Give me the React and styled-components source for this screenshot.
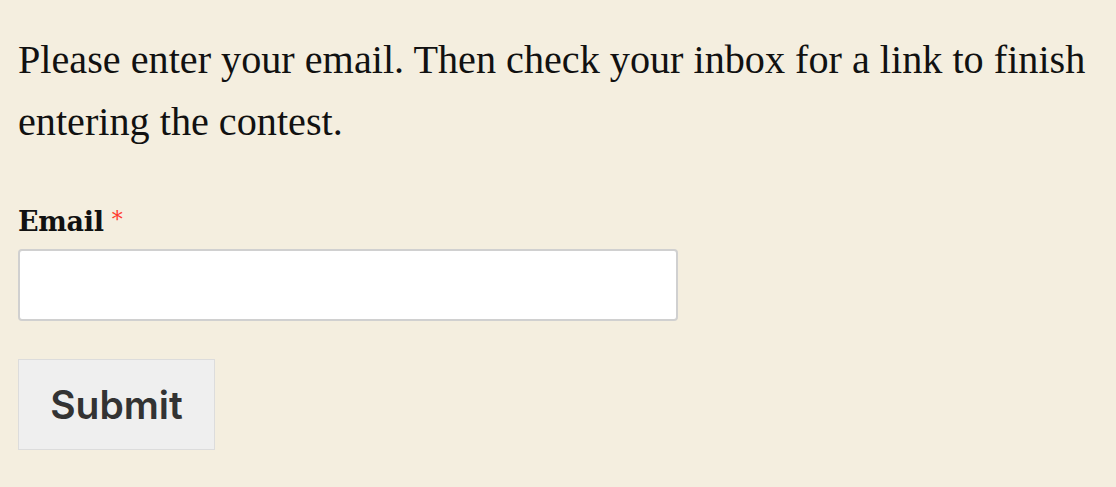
import styled, { createGlobalStyle } from "styled-components";

const GlobalStyle = createGlobalStyle`
  html, body {
    margin: 0;
    background: #f4eedf;
  }
`;

const App = () => {
  return (
    <>
      <GlobalStyle />
      <Page>
        <Intro>
          Please enter your email. Then check your inbox for a link to finish
          entering the contest.
        </Intro>
        <Form onSubmit={(e) => e.preventDefault()}>
          <Label htmlFor="email">
            Email<Required>*</Required>
          </Label>
          <Input id="email" type="email" />
          <SubmitButton type="submit">Submit</SubmitButton>
        </Form>
      </Page>
    </>
  );
};

const Page = styled.div`
  padding: 29px 0 0 18px;
`;

const Intro = styled.p`
  margin: 0;
  max-width: 1096px;
  font-family: "Liberation Serif", serif;
  font-size: 40.2px;
  line-height: 62px;
  color: #111;
`;

const Form = styled.form`
  display: flex;
  flex-direction: column;
  align-items: flex-start;
  margin-top: 51px;
`;

const Label = styled.label`
  font-family: "DejaVu Serif", serif;
  font-weight: bold;
  font-size: 27px;
  line-height: 32px;
  color: #111;
  letter-spacing: -0.3px;
`;

const Required = styled.span`
  color: #ff3b30;
  margin-left: 8px;
  font-weight: normal;
  font-size: 22px;
  vertical-align: 4px;
`;

const Input = styled.input`
  margin-top: 11px;
  width: 660px;
  height: 72px;
  box-sizing: border-box;
  background: #fff;
  border: 2px solid #d0d0d0;
  border-radius: 4px;
  outline: none;
`;

const SubmitButton = styled.button`
  margin-top: 38px;
  width: 197px;
  height: 91px;
  background: #efefef;
  border: 1px solid #dcdcdc;
  font-family: Inter, "Liberation Sans", sans-serif;
  font-weight: 600;
  font-size: 39px;
  color: #333;
  cursor: pointer;
`;

export default App;
